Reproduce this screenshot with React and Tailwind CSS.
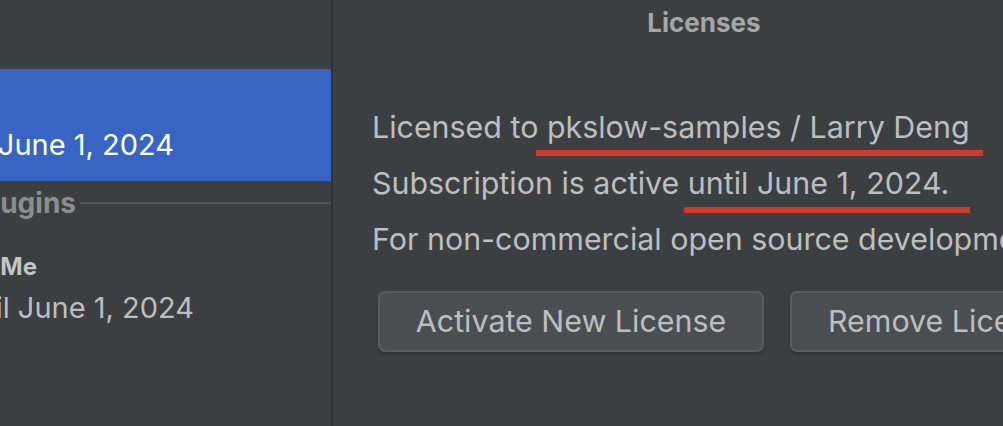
export default function App() {
  const font = { fontFamily: "Inter, 'Noto Sans', sans-serif" };
  return (
    <div
      className="w-[1003px] h-[426px] bg-[#3c3f41] flex overflow-hidden text-[#bcbec0]"
      style={font}
    >
      {/* Sidebar */}
      <div className="w-[333px] shrink-0 border-r-2 border-[#2f3133] flex flex-col pt-[69px]">
        <div className="h-[112px] bg-[#3865c4] flex flex-col justify-end pb-[20px]">
          <div className="w-[174px] overflow-hidden flex justify-end">
            <span className="whitespace-nowrap text-white text-[29px] leading-[32px]">
              Active until June 1, 2024
            </span>
          </div>
        </div>
        <div className="flex items-center h-[46px] -mt-[1px]">
          <div className="w-[76px] overflow-hidden flex justify-end shrink-0">
            <span className="whitespace-nowrap font-bold text-[#8b8d8f] text-[28px] leading-[32px]">
              Plugins
            </span>
          </div>
          <div className="flex-1 h-[2px] bg-[#515456] ml-[4px]" />
        </div>
        <div className="mt-[27px] w-[37px] overflow-hidden flex justify-end">
          <span className="whitespace-nowrap font-bold text-[#c3c5c7] text-[24px] leading-[28px]">
            Translate Me
          </span>
        </div>
        <div className="mt-[11px] w-[194px] overflow-hidden flex justify-end">
          <span className="whitespace-nowrap text-[#bcbec0] text-[29px] leading-[32px]">
            Active until June 1, 2024
          </span>
        </div>
      </div>

      {/* Main */}
      <div className="flex-1 flex flex-col min-w-0">
        <div className="pl-[72px] text-center pt-[8px]">
          <span className="font-bold text-[26px] leading-[30px] text-[#a4a6a8]">Licenses</span>
        </div>
        <div className="pl-[39px] pt-[61px] flex flex-col">
          <div className="relative whitespace-nowrap text-[30.4px] leading-[56px] h-[56px]">
            Licensed to pkslow-samples / Larry Deng
            <div className="absolute left-[164px] w-[447px] top-[51px] h-[6px] bg-[#cf3b2b]" />
          </div>
          <div className="relative whitespace-nowrap text-[30.4px] leading-[56px] h-[56px]">
            Subscription is active until June 1, 2024.
            <div className="absolute left-[312px] w-[286px] top-[52px] h-[6px] bg-[#cf3b2b]" />
          </div>
          <div className="whitespace-nowrap text-[30.4px] leading-[56px] h-[56px]">
            For non-commercial open source development
          </div>
        </div>
        <div className="flex gap-[26px] pl-[45px] pt-[24px]">
          <button className="shrink-0 w-[386px] h-[61px] rounded-[7px] border-2 border-[#5a5d60] bg-[#4b4e51] text-[30.4px] text-[#bcbec0] shadow-[0_2px_3px_rgba(0,0,0,0.25)]">
            Activate New License
          </button>
          <button className="shrink-0 w-[300px] h-[61px] rounded-[7px] border-2 border-[#5a5d60] bg-[#4b4e51] text-[30.4px] text-[#bcbec0] text-left pl-[36px] whitespace-nowrap shadow-[0_2px_3px_rgba(0,0,0,0.25)]">
            Remove License
          </button>
        </div>
      </div>
    </div>
  );
}
